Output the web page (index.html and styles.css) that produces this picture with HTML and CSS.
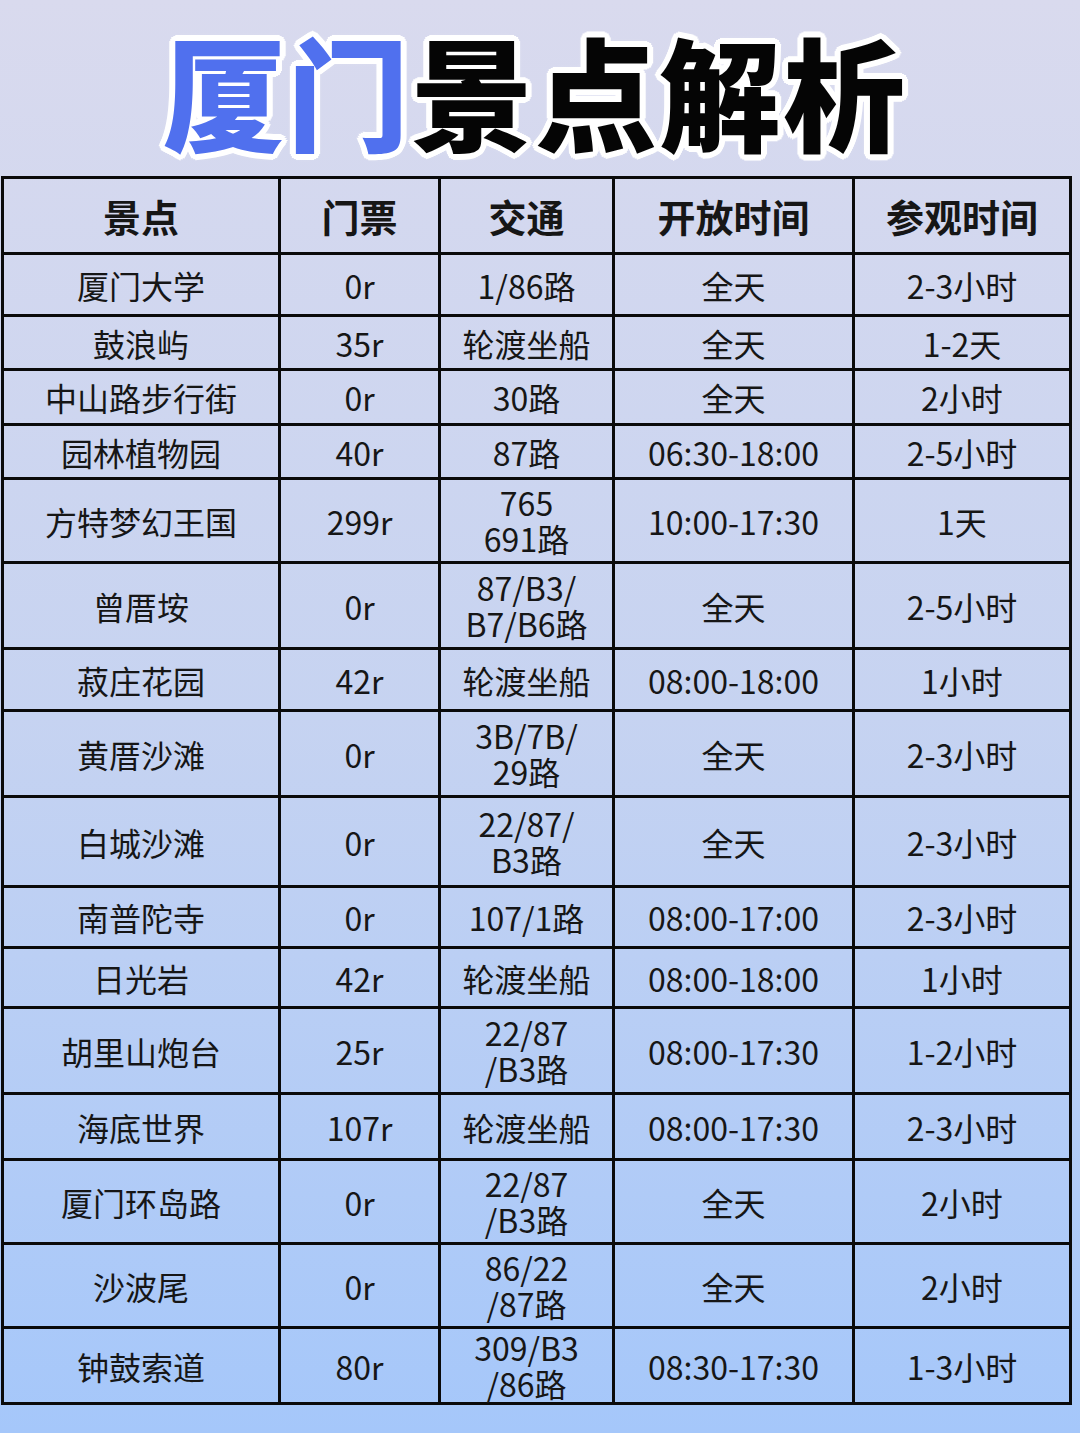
FILE: index.html
```html
<!DOCTYPE html>
<html lang="zh">
<head>
<meta charset="utf-8">
<title>厦门景点解析</title>
<link rel="stylesheet" href="styles.css">
</head>
<body>
<div class="page">
  <header class="title-bar">
    <h1 class="title"><span class="blue">厦门</span><span class="black">景点解析</span></h1>
  </header>
  <div class="grid">
    <div class="cell head">景点</div><div class="cell head">门票</div><div class="cell head">交通</div><div class="cell head">开放时间</div><div class="cell head">参观时间</div>

    <div class="cell">厦门大学</div><div class="cell">0r</div><div class="cell">1/86路</div><div class="cell">全天</div><div class="cell">2-3小时</div>
    <div class="cell">鼓浪屿</div><div class="cell">35r</div><div class="cell">轮渡坐船</div><div class="cell">全天</div><div class="cell">1-2天</div>
    <div class="cell">中山路步行街</div><div class="cell">0r</div><div class="cell">30路</div><div class="cell">全天</div><div class="cell">2小时</div>
    <div class="cell">园林植物园</div><div class="cell">40r</div><div class="cell">87路</div><div class="cell">06:30-18:00</div><div class="cell">2-5小时</div>
    <div class="cell">方特梦幻王国</div><div class="cell">299r</div><div class="cell two"><span>765</span><span>691路</span></div><div class="cell">10:00-17:30</div><div class="cell">1天</div>
    <div class="cell">曾厝垵</div><div class="cell">0r</div><div class="cell two"><span>87/B3/</span><span>B7/B6路</span></div><div class="cell">全天</div><div class="cell">2-5小时</div>
    <div class="cell">菽庄花园</div><div class="cell">42r</div><div class="cell">轮渡坐船</div><div class="cell">08:00-18:00</div><div class="cell">1小时</div>
    <div class="cell">黄厝沙滩</div><div class="cell">0r</div><div class="cell two"><span>3B/7B/</span><span>29路</span></div><div class="cell">全天</div><div class="cell">2-3小时</div>
    <div class="cell">白城沙滩</div><div class="cell">0r</div><div class="cell two"><span>22/87/</span><span>B3路</span></div><div class="cell">全天</div><div class="cell">2-3小时</div>
    <div class="cell">南普陀寺</div><div class="cell">0r</div><div class="cell">107/1路</div><div class="cell">08:00-17:00</div><div class="cell">2-3小时</div>
    <div class="cell">日光岩</div><div class="cell">42r</div><div class="cell">轮渡坐船</div><div class="cell">08:00-18:00</div><div class="cell">1小时</div>
    <div class="cell">胡里山炮台</div><div class="cell">25r</div><div class="cell two"><span>22/87</span><span>/B3路</span></div><div class="cell">08:00-17:30</div><div class="cell">1-2小时</div>
    <div class="cell">海底世界</div><div class="cell">107r</div><div class="cell">轮渡坐船</div><div class="cell">08:00-17:30</div><div class="cell">2-3小时</div>
    <div class="cell">厦门环岛路</div><div class="cell">0r</div><div class="cell two"><span>22/87</span><span>/B3路</span></div><div class="cell">全天</div><div class="cell">2小时</div>
    <div class="cell">沙波尾</div><div class="cell">0r</div><div class="cell two"><span>86/22</span><span>/87路</span></div><div class="cell">全天</div><div class="cell">2小时</div>
    <div class="cell">钟鼓索道</div><div class="cell">80r</div><div class="cell two"><span>309/B3</span><span>/86路</span></div><div class="cell">08:30-17:30</div><div class="cell">1-3小时</div>
  </div>
</div>
</body>
</html>
```

FILE: styles.css
```css
html, body {
  margin: 0;
  padding: 0;
}

body {
  width: 1080px;
  min-height: 1433px;
  background: linear-gradient(180deg, #d9daee 0%, #c6d3f1 50%, #a5c7fa 100%);
  font-family: "Noto Sans CJK SC", "Noto Sans", sans-serif;
  color: #161616;
}

.page {
  width: 1080px;
  height: 1433px;
  display: flex;
  flex-direction: column;
}

.title-bar {
  height: 176px;
  display: flex;
  align-items: center;
  justify-content: center;
}

.title {
  margin: 0;
  padding-right: 10px;
  padding-top: 2px;
  font-family: "Noto Sans CJK SC", sans-serif;
  font-weight: 900;
  font-size: 122px;
  line-height: 1;
  letter-spacing: 2px;
  white-space: nowrap;
  text-shadow:
    6px 0 0 #fff, -6px 0 0 #fff, 0 6px 0 #fff, 0 -6px 0 #fff,
    4px 4px 0 #fff, -4px 4px 0 #fff, 4px -4px 0 #fff, -4px -4px 0 #fff,
    5px 2px 0 #fff, -5px 2px 0 #fff, 5px -2px 0 #fff, -5px -2px 0 #fff,
    2px 5px 0 #fff, -2px 5px 0 #fff, 2px -5px 0 #fff, -2px -5px 0 #fff,
    0 0 10px rgba(255,255,255,0.6);
}

.blue {
  color: #5070ee;
}

.black {
  color: #050505;
}

.grid {
  margin-left: 1px;
  width: 1071px;
  box-sizing: border-box;
  display: grid;
  grid-template-columns: 277px 160px 174px 240px 217px;
  grid-template-rows: 76px 62px 54px 55px 54px 84px 86px 62px 86px 90px 61px 60px 86px 66px 84px 84px 76px;
  border-top: 3px solid #0a0a0a;
  border-left: 3px solid #0a0a0a;
}

.cell {
  box-sizing: border-box;
  border-right: 3px solid #0a0a0a;
  border-bottom: 3px solid #0a0a0a;
  display: flex;
  align-items: center;
  justify-content: center;
  text-align: center;
  font-size: 32px;
  line-height: 36px;
  font-weight: 400;
  white-space: nowrap;
}

.two {
  flex-direction: column;
  gap: 1px;
  line-height: 35px;
}

.head {
  font-size: 38px;
  font-weight: 700;
}
```
